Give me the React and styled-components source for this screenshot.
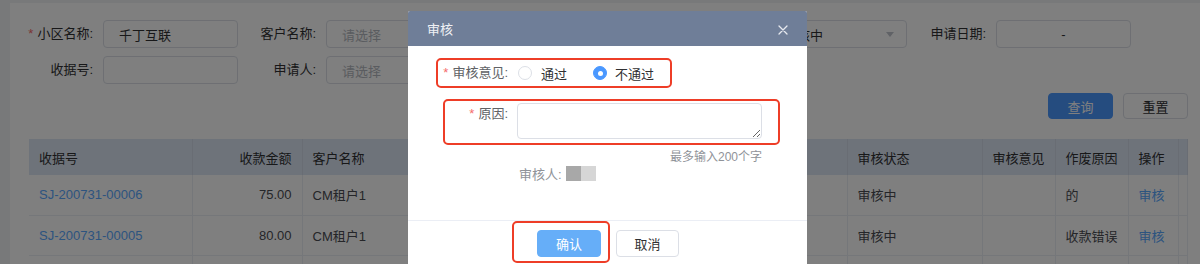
import styled, { createGlobalStyle } from 'styled-components'

const GlobalStyle = createGlobalStyle`
  html, body {
    margin: 0;
    padding: 0;
    height: 264px;
    overflow: hidden;
    background: #f0f2f5;
    font-family: "Liberation Sans", "Noto Sans CJK SC", sans-serif;
    font-size: 13px;
    color: #606266;
  }
  * { box-sizing: border-box; }
`

const Page = styled.div`
  position: relative;
  height: 264px;
  padding: 3px 0 0 10px;
`

const Card = styled.div`
  background: #fff;
  height: 100%;
`

const FilterForm = styled.div`
  padding: 17px 12px 0 13px;
`

const FormRow = styled.div`
  display: flex;
  gap: 8px;
  margin-bottom: 8px;
`

const Item = styled.div`
  display: flex;
  align-items: center;
`

const Label = styled.label`
  width: ${p => p.$w || 80}px;
  padding-right: 10px;
  text-align: right;
  color: #303133;
  font-size: 13px;
  line-height: 28px;
  white-space: nowrap;
  flex-shrink: 0;
`

const Star = styled.span`
  color: #f56c6c;
  margin-right: 4px;
`

const Input = styled.div`
  width: ${p => p.$w || 135}px;
  height: 28px;
  border: 1px solid #dcdfe6;
  border-radius: 4px;
  padding: 0 ${p => p.$pad || 15}px;
  display: flex;
  align-items: center;
  justify-content: ${p => (p.$center ? 'center' : 'space-between')};
  font-size: 13px;
  color: ${p => (p.$placeholder ? '#b4b8c0' : '#303133')};
`

const Caret = styled.span`
  width: 0;
  height: 0;
  border-left: 4px solid transparent;
  border-right: 4px solid transparent;
  border-top: 5px solid #c0c4cc;
  margin-right: -1px;
`

const Actions = styled.div`
  display: flex;
  justify-content: flex-end;
  gap: 10px;
  margin-top: 9px;
`

const Btn = styled.button`
  width: ${p => p.$w || 65}px;
  height: ${p => p.$h || 26}px;
  border-radius: 4px;
  font-family: inherit;
  font-size: 13px;
  padding: 0;
  border: 1px solid ${p => (p.$primary ? p.$bg || '#4a98ff' : '#dcdfe6')};
  background: ${p => (p.$primary ? p.$bg || '#4a98ff' : '#fff')};
  color: ${p => (p.$primary ? '#fff' : '#303133')};
  cursor: pointer;
`

const TableWrap = styled.div`
  padding: 20px 0 0 19px;
`

const Table = styled.table`
  width: 1158px;
  table-layout: fixed;
  border-collapse: collapse;
  font-size: 13px;
`

const Th = styled.th`
  height: 36px;
  background: #dce6f5;
  color: #303133;
  font-weight: normal;
  text-align: ${p => p.$align || 'left'};
  padding: 0 10px;
  border-right: 1px solid #d3dbe8;
  white-space: nowrap;
  overflow: hidden;
`

const Td = styled.td`
  height: 40px;
  padding: 0 10px;
  text-align: ${p => p.$align || 'left'};
  color: #4a4c52;
  border-right: 1px solid #ebeef5;
  border-bottom: 1px solid #ebeef5;
  white-space: nowrap;
  overflow: hidden;
`

const Link = styled.span`
  color: #5aa8ff;
`

const Mask = styled.div`
  position: absolute;
  inset: 0;
  background: rgba(0, 0, 0, 0.5);
`

const Dialog = styled.div`
  position: absolute;
  left: 408px;
  top: 11px;
  width: 399px;
  background: #fff;
  border-radius: 2px 2px 0 0;
  overflow: hidden;
`

const DialogHeader = styled.div`
  height: 35px;
  background: #6f7e98;
  display: flex;
  align-items: center;
  justify-content: space-between;
  padding: 0 19px 0 19px;
  color: #eef0f4;
  font-size: 13px;
`

const CloseBtn = styled.span`
  display: flex;
  margin-top: 3px;
`

const DialogBody = styled.div`
  padding: 12px 0 38px;
`

const Marked = styled.div`
  border: 2px solid #ee3d27;
  border-radius: 5px;
`

const OpinionRow = styled(Marked)`
  margin-left: 28px;
  width: 236px;
  height: 30px;
  display: flex;
  align-items: center;
`

const ReasonRow = styled(Marked)`
  margin: 11px 0 0 35px;
  width: 337px;
  height: 46px;
  display: flex;
  align-items: flex-start;
  padding-top: 1px;
`

const DLabel = styled.span`
  width: ${p => p.$w}px;
  padding-right: ${p => p.$pr || 10}px;
  text-align: right;
  color: #606266;
  font-size: 13px;
  line-height: ${p => p.$lh || 20}px;
  flex-shrink: 0;
  white-space: nowrap;
`

const RadioGroup = styled.div`
  display: flex;
  align-items: center;
`

const Radio = styled.span`
  width: 14px;
  height: 14px;
  border-radius: 50%;
  border: 1px solid ${p => (p.$checked ? '#4a98ff' : '#dcdfe6')};
  background: ${p => (p.$checked ? '#4a98ff' : '#fff')};
  display: flex;
  align-items: center;
  justify-content: center;
  margin-left: ${p => p.$ml || 0}px;
  &::after {
    content: '';
    width: 5px;
    height: 5px;
    border-radius: 50%;
    background: #fff;
    display: ${p => (p.$checked ? 'block' : 'none')};
  }
`

const RadioText = styled.span`
  margin-left: ${p => p.$ml || 9}px;
  color: #303133;
  font-size: 13px;
`

const TextArea = styled.textarea`
  width: 245px;
  height: 36px;
  border: 1px solid #dcdfe6;
  border-radius: 4px;
  font-family: inherit;
  font-size: 13px;
  padding: 5px 8px;
  margin-top: 1px;
  outline: none;
  resize: vertical;
`

const Hint = styled.div`
  margin-left: 109px;
  width: 245px;
  text-align: right;
  font-size: 12px;
  line-height: 14px;
  margin-top: 5px;
  color: #909399;
`

const Reviewer = styled.div`
  margin-left: 111px;
  height: 18px;
  display: flex;
  align-items: center;
  color: #909399;
  font-size: 13px;
`

const Avatar = styled.span`
  display: flex;
  margin-left: 4px;
  height: 15px;
`

const AvatarHalf = styled.span`
  width: 15px;
  height: 15px;
  background: ${p => p.$c};
`

const DialogFooter = styled.div`
  border-top: 1px solid #ebeef5;
  height: 60px;
  display: flex;
  align-items: flex-start;
  gap: 6px;
  padding-left: 104px;
`

const ConfirmWrap = styled(Marked)`
  padding: 7px 7px 4px 23px;
  border-radius: 5px;
`

const CancelWrap = styled.div`
  padding-top: 9px;
`

const columns = [
  { w: 163, title: '收据号' },
  { w: 110, title: '收款金额', align: 'right' },
  { w: 128, title: '客户名称' },
  { w: 130, title: '收款方式' },
  { w: 120, title: '申请人' },
  { w: 167, title: '申请时间' },
  { w: 135, title: '审核状态' },
  { w: 73, title: '审核意见' },
  { w: 73, title: '作废原因' },
  { w: 50, title: '操作' },
  { w: 9, title: '' },
]

const rows = [
  ['SJ-200731-00006', '75.00', 'CM租户1', '现金', '张三', '2020-07-31', '审核中', '', '的'],
  ['SJ-200731-00005', '80.00', 'CM租户1', '现金', '张三', '2020-07-31', '审核中', '', '收款错误'],
]

function CloseIcon() {
  return (
    <svg width="10" height="10" viewBox="0 0 10 10">
      <path d="M1 1 L9 9 M9 1 L1 9" stroke="#e6e9ee" strokeWidth="1.3" strokeLinecap="round" />
    </svg>
  )
}

export default function App() {
  return (
    <>
      <GlobalStyle />
      <Page>
        <Card>
          <FilterForm>
            <FormRow>
              <Item>
                <Label><Star>*</Star>小区名称:</Label>
                <Input>千丁互联</Input>
              </Item>
              <Item>
                <Label>客户名称:</Label>
                <Input $placeholder>请选择</Input>
              </Item>
              <Item>
                <Label $w={301}>审核状态:</Label>
                <Input $w={137} $pad={13}>审核中<Caret /></Input>
              </Item>
              <Item>
                <Label $w={81}>申请日期:</Label>
                <Input $center>-</Input>
              </Item>
            </FormRow>
            <FormRow>
              <Item>
                <Label>收据号:</Label>
                <Input />
              </Item>
              <Item>
                <Label>申请人:</Label>
                <Input $placeholder>请选择</Input>
              </Item>
            </FormRow>
            <Actions>
              <Btn $primary>查询</Btn>
              <Btn>重置</Btn>
            </Actions>
          </FilterForm>
          <TableWrap>
            <Table>
              <colgroup>
                {columns.map((c, i) => <col key={i} style={{ width: c.w }} />)}
              </colgroup>
              <thead>
                <tr>
                  {columns.map((c, i) => (
                    <Th key={i} $align={c.align}>{c.title}</Th>
                  ))}
                </tr>
              </thead>
              <tbody>
                {rows.map((r, i) => (
                  <tr key={i}>
                    <Td><Link>{r[0]}</Link></Td>
                    <Td $align="right">{r[1]}</Td>
                    {r.slice(2).map((v, j) => <Td key={j}>{v}</Td>)}
                    <Td><Link>审核</Link></Td>
                    <Td />
                  </tr>
                ))}
                <tr>
                  {columns.map((c, i) => <Td key={i} />)}
                </tr>
              </tbody>
            </Table>
          </TableWrap>
        </Card>
        <Mask />
        <Dialog>
          <DialogHeader>
            <span>审核</span>
            <CloseBtn><CloseIcon /></CloseBtn>
          </DialogHeader>
          <DialogBody>
            <OpinionRow>
              <DLabel $w={80}><Star>*</Star>审核意见:</DLabel>
              <RadioGroup>
                <Radio />
                <RadioText>通过</RadioText>
                <Radio $checked $ml={26} />
                <RadioText $ml={8}>不通过</RadioText>
              </RadioGroup>
            </OpinionRow>
            <ReasonRow>
              <DLabel $w={72} $pr={9} $lh={24}><Star>*</Star>原因:</DLabel>
              <TextArea />
            </ReasonRow>
            <Hint>最多输入200个字</Hint>
            <Reviewer>
              审核人:
              <Avatar>
                <AvatarHalf $c="#a8a8a8" />
                <AvatarHalf $c="#d6d6d6" />
              </Avatar>
            </Reviewer>
          </DialogBody>
          <DialogFooter>
            <ConfirmWrap>
              <Btn $primary $bg="#66aef8" $w={64} $h={27}>确认</Btn>
            </ConfirmWrap>
            <CancelWrap>
              <Btn $w={63} $h={27}>取消</Btn>
            </CancelWrap>
          </DialogFooter>
        </Dialog>
      </Page>
    </>
  )
}
